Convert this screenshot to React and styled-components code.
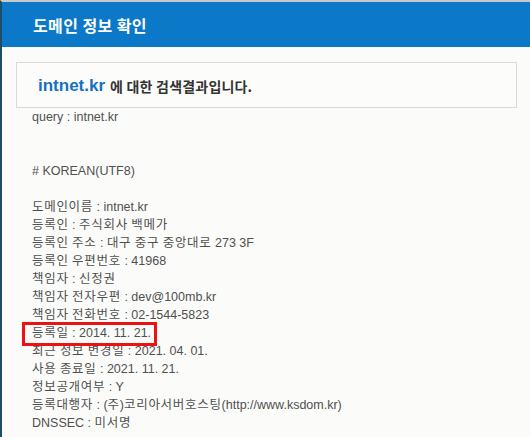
import React from "react";
import styled, { createGlobalStyle } from "styled-components";

const Global = createGlobalStyle`
  html, body { margin: 0; padding: 0; background: #fbfcfa; }
  body { width: 530px; height: 437px; overflow: hidden; }
`;

const Frame = styled.div`
  box-sizing: border-box;
  width: 530px;
  height: 437px;
  border-top: 2px solid #c9c9c9;
  border-left: 2px solid #1d4d68;
  background: #fbfcfa;
  display: flex;
  flex-direction: column;
`;

const Header = styled.header`
  height: 45px;
  background: #0b78c8;
  display: flex;
  align-items: center;
  padding-left: 31px;
  color: #ffffff;
  font-family: "Noto Sans CJK KR", "Noto Sans", sans-serif;
  font-weight: 700;
  font-size: 16px;
  letter-spacing: 0.4px;
`;

const Content = styled.main`
  padding: 15px 13px 0 14px;
`;

const ResultBox = styled.div`
  box-sizing: border-box;
  height: 46px;
  border: 1px solid #d9dad8;
  background: #fcfdfb;
  display: flex;
  align-items: center;
  padding-left: 21px;
  padding-top: 1px;
  font-family: "Noto Sans CJK KR", sans-serif;
  font-weight: 700;
  color: #333;
`;

const Domain = styled.span`
  font-family: "Liberation Sans", Arial, sans-serif;
  font-size: 17px;
  color: #1670c0;
  margin-right: 5px;
`;

const Caption = styled.span`
  font-size: 14px;
  letter-spacing: 0.2px;
`;

const Whois = styled.div`
  padding-left: 16px;
  font-family: "Liberation Sans", "Noto Sans CJK KR", sans-serif;
  font-size: 12.5px;
  line-height: 18px;
  color: #505050;
  white-space: pre;
`;

const Line = styled.div`
  height: 18px;
`;

const Han = styled.span`
  letter-spacing: 0.7px;
`;

const Marked = styled.span`
  position: relative;
  display: inline-block;
  &::before {
    content: "";
    position: absolute;
    left: -10px;
    right: -6px;
    top: -2px;
    height: 24px;
    box-sizing: border-box;
    border: 3px solid #ee1111;
  }
`;

const lines = [
  "query : intnet.kr",
  "",
  "",
  "# KOREAN(UTF8)",
  "",
  "도메인이름 : intnet.kr",
  "등록인 : 주식회사 백메가",
  "등록인 주소 : 대구 중구 중앙대로 273 3F",
  "등록인 우편번호 : 41968",
  "책임자 : 신정권",
  "책임자 전자우편 : dev@100mb.kr",
  "책임자 전화번호 : 02-1544-5823",
  { mark: "등록일 : 2014. 11. 21." },
  "최근 정보 변경일 : 2021. 04. 01.",
  "사용 종료일 : 2021. 11. 21.",
  "정보공개여부 : Y",
  "등록대행자 : (주)코리아서버호스팅(http://www.ksdom.kr)",
  "DNSSEC : 미서명",
];

function Text({ value }) {
  return value
    .split(/([\uAC00-\uD7A3]+)/)
    .map((part, i) =>
      /[\uAC00-\uD7A3]/.test(part) ? <Han key={i}>{part}</Han> : part
    );
}

export default function App() {
  return (
    <>
      <Global />
      <Frame>
        <Header>도메인 정보 확인</Header>
        <Content>
          <ResultBox>
            <Domain>intnet.kr</Domain>
            <Caption>에 대한 검색결과입니다.</Caption>
          </ResultBox>
          <Whois>
            {lines.map((l, i) => (
              <Line key={i}>
                {typeof l === "string" ? (
                  <Text value={l} />
                ) : (
                  <Marked>
                    <Text value={l.mark} />
                  </Marked>
                )}
              </Line>
            ))}
          </Whois>
        </Content>
      </Frame>
    </>
  );
}
